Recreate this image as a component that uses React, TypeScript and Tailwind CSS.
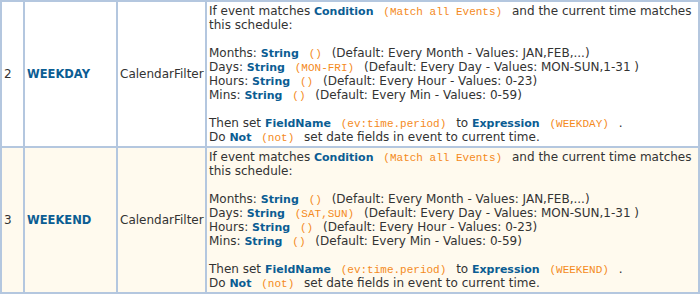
import React from "react";

const B = ({ children }: { children: React.ReactNode }) => (
  <span className="font-bold text-[11px] leading-[10px] text-[#0b5d93]">{children}</span>
);
const M = ({ children }: { children: React.ReactNode }) => (
  <span className="mx-[6px] font-['Liberation_Mono',monospace] text-[11px] leading-[10px] text-[#f48a1c]">{children}</span>
);

function Row({ n, name, days, expr, bg }: { n: string; name: string; days: string; expr: string; bg: string }) {
  return (
    <>
      <div className={`${bg} flex items-center px-[2px]`}>{n}</div>
      <div className={`${bg} flex items-center px-[2px]`}>
        <span className="font-bold text-[11.5px] text-[#0b5d93]">{name}</span>
      </div>
      <div className={`${bg} flex items-center px-[2px]`}>CalendarFilter</div>
      <div className={`${bg} px-[2px] py-[2px] whitespace-nowrap`}>
        <div className="h-[14px]">
          If event matches <B>Condition</B> <M>(Match all Events)</M> and the current time matches
        </div>
        <div className="h-[14px]">this schedule:</div>
        <div className="h-[14px]" />
        <div className="h-[14px]">
          Months: <B>String</B> <M>()</M> (Default: Every Month - Values: JAN,FEB,...)
        </div>
        <div className="h-[14px]">
          Days: <B>String</B> <M>{days}</M> (Default: Every Day - Values: MON-SUN,1-31 )
        </div>
        <div className="h-[14px]">
          Hours: <B>String</B> <M>()</M> (Default: Every Hour - Values: 0-23)
        </div>
        <div className="h-[14px]">
          Mins: <B>String</B> <M>()</M> (Default: Every Min - Values: 0-59)
        </div>
        <div className="h-[14px]" />
        <div className="h-[14px]">
          Then set <B>FieldName</B> <M>(ev:time.period)</M> to <B>Expression</B> <M>{expr}</M> .
        </div>
        <div className="h-[14px]">
          Do <B>Not</B> <M>(not)</M> set date fields in event to current time.
        </div>
      </div>
    </>
  );
}

export default function App() {
  return (
    <div className="w-[700px] h-[294px] bg-white">
      <div className="grid grid-cols-[21px_91px_87px_491px] gap-[2px] p-[2px] bg-[#b4c7df] font-['DejaVu_Sans',sans-serif] text-[12px] leading-[14px] text-[#333333]">
        <Row n="2" name="WEEKDAY" days="(MON-FRI)" expr="(WEEKDAY)" bg="bg-white" />
        <Row n="3" name="WEEKEND" days="(SAT,SUN)" expr="(WEEKEND)" bg="bg-[#fffaee]" />
      </div>
    </div>
  );
}
